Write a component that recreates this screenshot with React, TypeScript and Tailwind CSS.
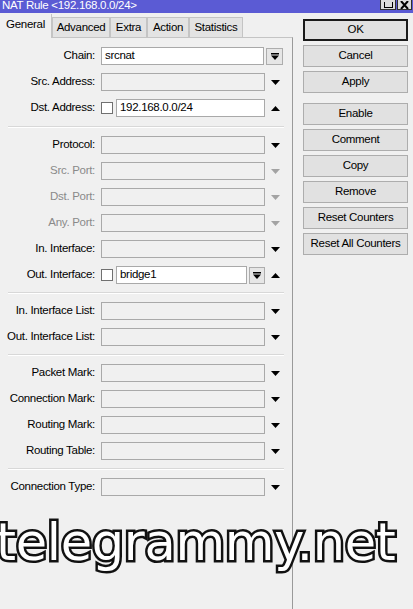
import type { ReactNode } from "react";

const FONT = "font-['Liberation_Sans',Arial,sans-serif] text-[11.5px] tracking-[-0.3px]";

function DownArrow({ disabled }: { disabled?: boolean }) {
  return (
    <svg width="9" height="5" viewBox="0 0 9 5" className="block">
      <polygon points="0,0 9,0 4.5,5" fill={disabled ? "#a3a3a3" : "#000"} />
    </svg>
  );
}

function UpArrow() {
  return (
    <svg width="9" height="5" viewBox="0 0 9 5" className="block">
      <polygon points="0,5 9,5 4.5,0" fill="#000" />
    </svg>
  );
}

function DropButton({ w }: { w: string }) {
  return (
    <div
      className={`${w} flex h-[17px] items-center justify-center border border-[#adadad] bg-[#e6e6e6]`}
    >
      <svg width="8" height="7" viewBox="0 0 8 7" className="block">
        <rect x="0" y="0" width="8" height="1.5" fill="#000" />
        <polygon points="0,2.5 8,2.5 4,7" fill="#000" />
      </svg>
    </div>
  );
}

function Check() {
  return <div className="h-[12px] w-[12px] shrink-0 border border-[#707070] bg-white" />;
}

function Field({
  w,
  value,
  white,
}: {
  w: string;
  value?: string;
  white?: boolean;
}) {
  return (
    <div
      className={`${w} flex h-[18px] shrink-0 items-center border border-[#a9a9a9] pl-[3px] ${
        white ? "bg-white" : "bg-[#f0f0f0]"
      }`}
    >
      {value}
    </div>
  );
}

function Row({
  label,
  disabled,
  children,
}: {
  label: string;
  disabled?: boolean;
  children: ReactNode;
}) {
  return (
    <div className="flex h-[18px] items-center">
      <div
        className={`w-[96px] shrink-0 pr-[1px] text-right ${
          disabled ? "text-[#8a8a8a]" : "text-black"
        }`}
      >
        {label}
      </div>
      <div className="ml-[5px] flex items-center">{children}</div>
    </div>
  );
}

function ArrowSlot({ children }: { children?: ReactNode }) {
  return <div className="ml-[6px] flex w-[9px] items-center">{children}</div>;
}

function ComboRow({ label, disabled }: { label: string; disabled?: boolean }) {
  return (
    <Row label={label} disabled={disabled}>
      <Field w="w-[164px]" />
      <ArrowSlot>
        <DownArrow disabled={disabled} />
      </ArrowSlot>
    </Row>
  );
}

function Separator({ top }: { top: string }) {
  return (
    <div className={`mb-[8px] ml-[8px] w-[276px] ${top}`}>
      <div className="h-px bg-[#d8d8d8]" />
      <div className="h-px bg-white" />
    </div>
  );
}

function Btn({ label, primary }: { label: string; primary?: boolean }) {
  return (
    <div
      className={`flex h-[22px] w-[105px] items-center justify-center bg-[#e1e1e1] text-black ${
        primary ? "border-2 border-[#1a1a1a]" : "border border-[#adadad]"
      }`}
    >
      {label}
    </div>
  );
}

function Tab({ label, active, w }: { label: string; active?: boolean; w: string }) {
  return (
    <div
      className={`${w} flex items-center justify-center border-[#c4c4c4] ${
        active
          ? "relative z-10 -mb-px h-[24px] border-l-0 border-r border-t-0 bg-[#f0f0f0] pb-[2px]"
          : "h-[20px] border border-b-0 bg-[#e3e3e3]"
      }`}
    >
      {label}
    </div>
  );
}

export default function App() {
  return (
    <div className={`relative h-[609px] w-[413px] overflow-hidden bg-[#f0f0f0] ${FONT}`}>
      {/* title bar */}
      <div className="flex h-[13px] items-start justify-between overflow-hidden bg-[#5b5bd4]">
        <div className="-mt-[3px] ml-[2px] whitespace-nowrap text-[11.5px] leading-[16px] text-white">
          NAT Rule &lt;192.168.0.0/24&gt;
        </div>
        <div className="mr-[1px] flex gap-[1px]">
          <div className="flex h-[10px] w-[16px] items-end justify-center border border-t-0 border-[#303030] bg-[#dcdcdc] pb-[1px]">
            <div className="h-[6px] w-[9px] border border-t-0 border-black" />
          </div>
          <div className="flex h-[10px] w-[15px] items-end justify-center border border-t-0 border-[#303030] bg-[#dcdcdc]">
            <svg width="9" height="8" viewBox="0 0 9 8" className="block">
              <path d="M1 0 L8 8 M8 0 L1 8" stroke="#000" strokeWidth="2" />
            </svg>
          </div>
        </div>
      </div>

      <div className="flex h-[596px]">
        {/* left: tabs + form */}
        <div className="flex w-[293px] shrink-0 flex-col">
          <div className="flex h-[24px] items-end">
            <Tab label="General" active w="w-[52px]" />
            <Tab label="Advanced" w="w-[58px]" />
            <Tab label="Extra" w="w-[37px]" />
            <Tab label="Action" w="w-[42px]" />
            <Tab label="Statistics" w="w-[54px]" />
          </div>
          <div className="flex-1 border-r border-t border-r-[#9a9a9a] border-t-[#c4c4c4] pt-[9px]">
            <div className="flex flex-col gap-[8px]">
              <Row label="Chain:">
                <Field w="w-[163px]" value="srcnat" white />
                <div className="ml-[2px]">
                  <DropButton w="w-[17px]" />
                </div>
              </Row>
              <ComboRow label="Src. Address:" />
              <Row label="Dst. Address:">
                <Check />
                <div className="ml-[3px]">
                  <Field w="w-[149px]" value="192.168.0.0/24" white />
                </div>
                <ArrowSlot>
                  <UpArrow />
                </ArrowSlot>
              </Row>
            </div>
            <Separator top="mt-[9px]" />
            <div className="flex flex-col gap-[8px]">
              <ComboRow label="Protocol:" />
              <ComboRow label="Src. Port:" disabled />
              <ComboRow label="Dst. Port:" disabled />
              <ComboRow label="Any. Port:" disabled />
              <ComboRow label="In. Interface:" />
              <Row label="Out. Interface:">
                <Check />
                <div className="ml-[3px]">
                  <Field w="w-[131px]" value="bridge1" white />
                </div>
                <div className="ml-[2px]">
                  <DropButton w="w-[16px]" />
                </div>
                <ArrowSlot>
                  <UpArrow />
                </ArrowSlot>
              </Row>
            </div>
            <Separator top="mt-[8px]" />
            <div className="flex flex-col gap-[8px]">
              <ComboRow label="In. Interface List:" />
              <ComboRow label="Out. Interface List:" />
            </div>
            <Separator top="mt-[8px]" />
            <div className="flex flex-col gap-[8px]">
              <ComboRow label="Packet Mark:" />
              <ComboRow label="Connection Mark:" />
              <ComboRow label="Routing Mark:" />
              <ComboRow label="Routing Table:" />
            </div>
            <Separator top="mt-[8px]" />
            <ComboRow label="Connection Type:" />
          </div>
        </div>

        {/* right: buttons */}
        <div className="flex flex-1 flex-col pl-[10px] pt-[6px]">
          <div className="flex flex-col gap-[4px]">
            <Btn label="OK" primary />
            <Btn label="Cancel" />
            <Btn label="Apply" />
          </div>
          <div className="mt-[10px] flex flex-col gap-[4px]">
            <Btn label="Enable" />
            <Btn label="Comment" />
            <Btn label="Copy" />
            <Btn label="Remove" />
            <Btn label="Reset Counters" />
            <Btn label="Reset All Counters" />
          </div>
        </div>
      </div>

      {/* watermark */}
      <div className="absolute left-[-4px] top-[517px] whitespace-nowrap font-['DejaVu_Sans',sans-serif] text-[51px] leading-none text-white [-webkit-text-stroke:5px_#111] [paint-order:stroke_fill]">
        telegrammy.net
      </div>
    </div>
  );
}
